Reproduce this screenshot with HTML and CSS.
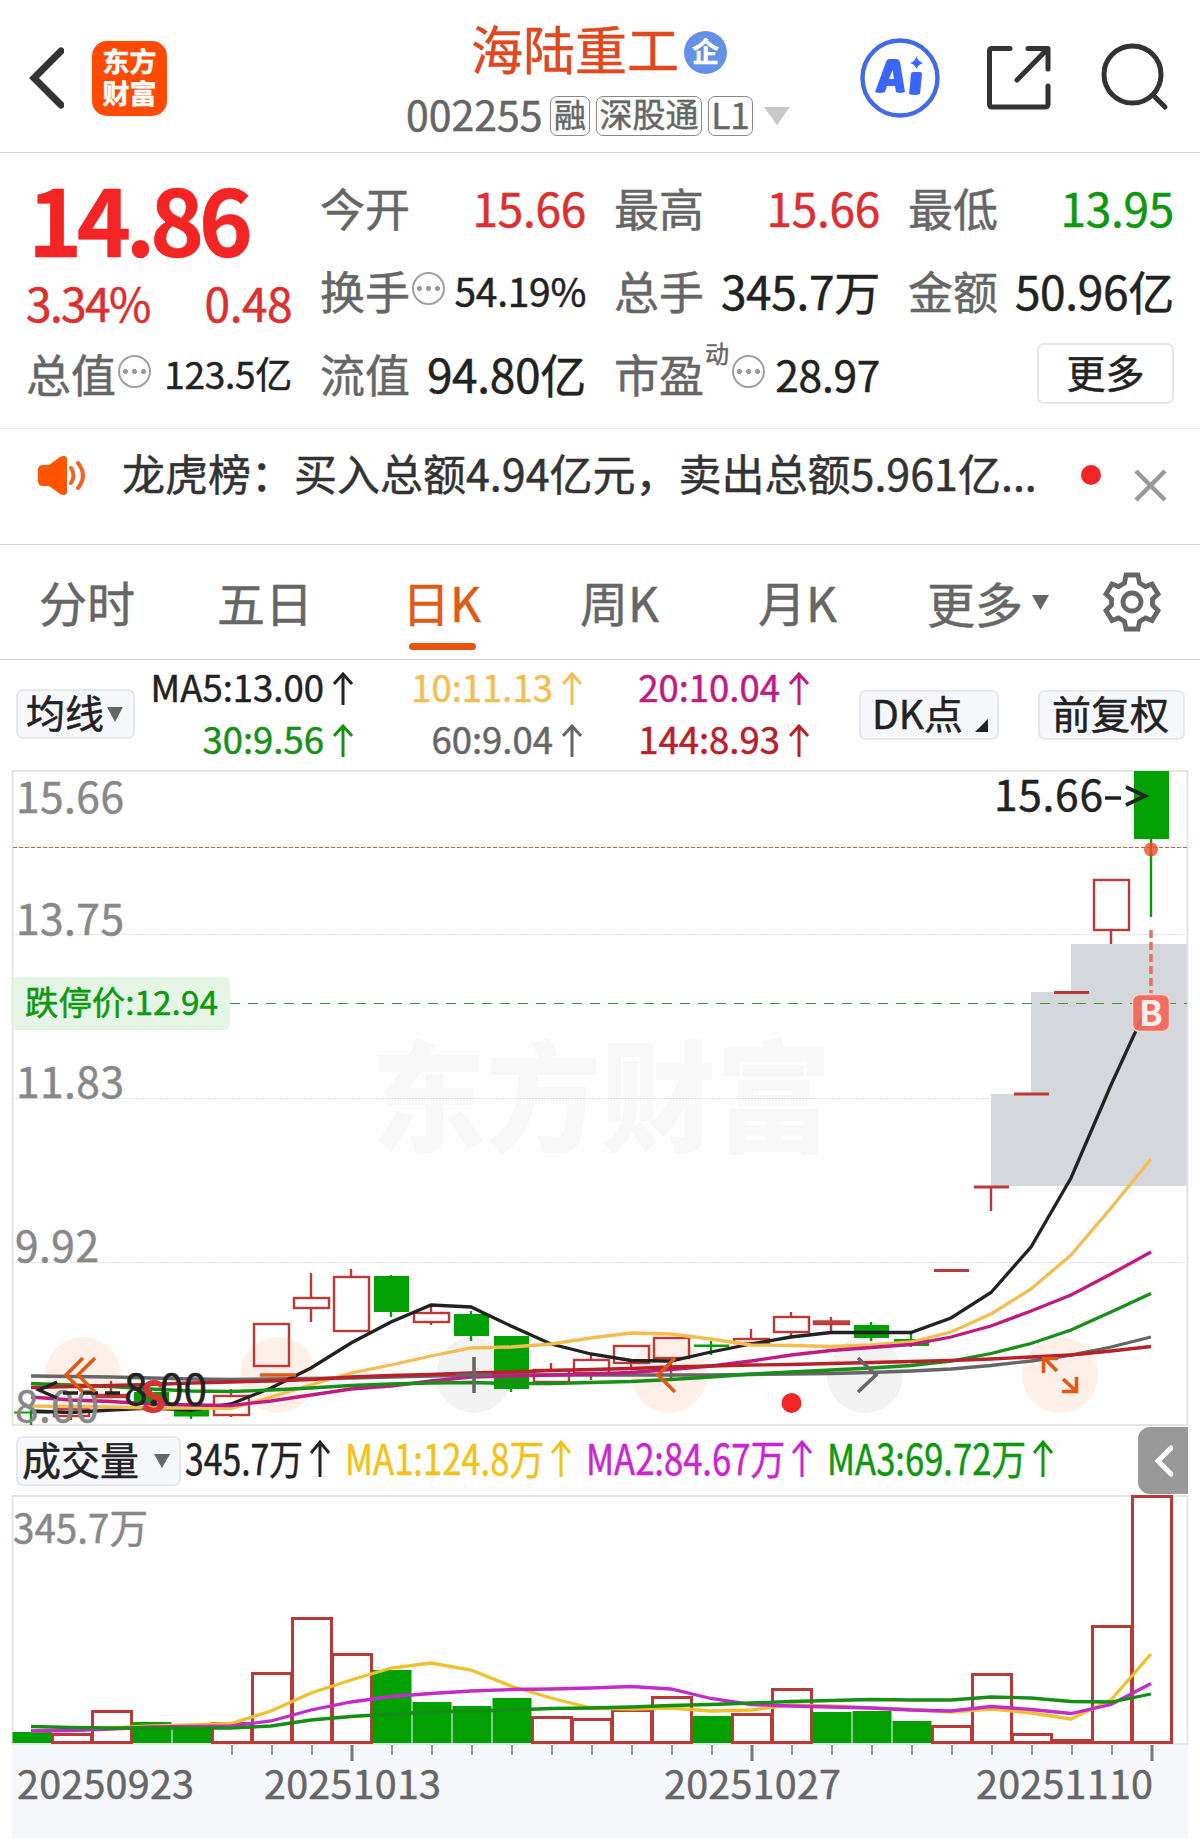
FILE: index.html
```html
<!DOCTYPE html>
<html lang="zh-CN">
<head>
    <meta charset="UTF-8">
    <meta name="viewport" content="width=device-width, initial-scale=1.0">
    <title>海陆重工 002255</title>
    <link rel="stylesheet" href="styles.css">
</head>
<body>

    <header class="header">
        <svg class="back" width="36" height="62" viewBox="0 0 36 62"><path d="M33 4 L6 31 L33 58" fill="none" stroke="#333" stroke-width="7" stroke-linecap="round"/></svg>
        <div class="logo"><span>东方</span><span>财富</span></div>
        <div class="title">
            <div class="name">海陆重工<span class="badge">企</span></div>
            <div class="code">
                <span class="number">002255</span>
                <span class="tag">融</span>
                <span class="tag wide">深股通</span>
                <span class="tag l1">L1</span>
                <svg class="arrow-down" width="26" height="18" viewBox="0 0 26 18"><path d="M0 0H26L13 18Z" fill="#c8c8c8"/></svg>
            </div>
        </div>
        <svg class="ai" width="80" height="80" viewBox="0 0 80 80">
            <circle cx="40" cy="40" r="37.500" fill="none" stroke="#4169e8" stroke-width="4.400"/>
            <path fill="#3a66fb" fill-rule="evenodd" d="M15 54 L26 24 Q27 21 30 21 H36 Q39 21 40 24 L45 54 Q40 56 36 54 L35 48 H27 L25 54 Q20 56 15 54Z M29 41 H34 L32.500 32Z"/>
            <path fill="#3a66fb" d="M53 34 H60 Q62 34 62 36 L60 56 Q55 58 49 56 L51 36 Q51 34 53 34Z M56.500 18 Q58 23.500 63 25 Q58 26.500 56.500 31 Q55 26.500 50 25 Q55 23.500 56.500 18Z"/>
        </svg>
        <svg class="share" width="66" height="66" viewBox="0 0 66 66">
            <path d="M24 3.500 H6 Q3.500 3.500 3.500 6 V59 Q3.500 62 6 62 H59 Q62 62 62 59 V41 M42 3.500 H62 V24 M61 4.500 L31 35" fill="none" stroke="#333" stroke-width="5" stroke-linecap="round" stroke-linejoin="round"/>
        </svg>
        <svg class="search" width="68" height="68" viewBox="0 0 68 68">
            <circle cx="31.500" cy="31.500" r="28.500" fill="none" stroke="#333" stroke-width="5"/>
            <path d="M52 52 L64 64" stroke="#333" stroke-width="5" stroke-linecap="round"/>
        </svg>
    </header>

    <section class="quote">
        <div class="last">
            <div class="price">14.86</div>
            <div class="change"><span class="percent">3.34%</span><span>0.48</span></div>
        </div>
        <div class="cell"><label>今开</label><b class="up">15.66</b></div>
        <div class="cell"><label>最高</label><b class="up">15.66</b></div>
        <div class="cell"><label>最低</label><b class="down">13.95</b></div>
        <div class="cell"><label>换手<i class="info"></i></label><b class="mid">54.19%</b></div>
        <div class="cell"><label>总手</label><b>345.7万</b></div>
        <div class="cell"><label>金额</label><b>50.96亿</b></div>
        <div class="cell"><label>总值<i class="info"></i></label><b class="small">123.5亿</b></div>
        <div class="cell"><label>流值</label><b>94.80亿</b></div>
        <div class="cell"><label>市盈<sup>动</sup><i class="info"></i></label><b class="pe">28.97</b></div>
        <div class="cell end"><button class="more">更多</button></div>
    </section>

    <section class="notice">
        <svg width="50" height="42" viewBox="0 0 50 42">
            <path d="M6 10 H12 L23 2 Q30 -1 30 5 V36 Q30 42 23 39 L12 31 H6 Q1 31 1 26 V15 Q1 10 6 10Z" fill="#ff5500"/>
            <path d="M34 13 Q39 20.500 34 28 M41 8 Q51 20.500 41 33" fill="none" stroke="#f4622a" stroke-width="4" stroke-linecap="round"/>
        </svg>
        <p>龙虎榜：买入总额4.94亿元，卖出总额5.961亿...</p>
        <span class="dot"></span>
        <svg class="close" width="34" height="34" viewBox="0 0 34 34"><path d="M2 2 L31 31 M31 2 L2 31" stroke="#999" stroke-width="4.500"/></svg>
    </section>

    <nav class="tabs">
        <a>分时</a>
        <a>五日</a>
        <a class="active">日K</a>
        <a>周K</a>
        <a>月K</a>
        <a class="tab-more">更多<svg width="17" height="15" viewBox="0 0 17 15"><path d="M0 0H17L8.500 15Z" fill="#666"/></svg></a>
        <svg class="gear" width="60" height="60" viewBox="0 0 60 60" fill="none" stroke="#666" stroke-width="4.800">
            <path d="M24 3 H36 L37.500 11 L43.500 14.500 L50 12 L56 22 L50.500 27 V33 L56 38.500 L50 48.500 L43.500 46 L37.500 49.500 L36 57 H24 L22.500 49.500 L16.500 46 L10 48.500 L4 38.500 L9.500 33 V27 L4 22 L10 12 L16.500 14.500 L22.500 11Z"/>
            <circle cx="30" cy="30" r="9"/>
        </svg>
    </nav>

    <section class="ma-bar">
        <button class="btn ma-btn">均线<svg width="16" height="15" viewBox="0 0 16 15"><path d="M0 0H16L8 15Z" fill="#666"/></svg></button>
        <div class="ma-list">
            <span class="ma5">MA5:13.00<svg class="up-arrow" viewBox="0 0 20 34"><path d="M10 33V2M1 12L10 2L19 12"/></svg></span>
            <span class="ma10">10:11.13<svg class="up-arrow" viewBox="0 0 20 34"><path d="M10 33V2M1 12L10 2L19 12"/></svg></span>
            <span class="ma20">20:10.04<svg class="up-arrow" viewBox="0 0 20 34"><path d="M10 33V2M1 12L10 2L19 12"/></svg></span>
            <span class="ma30">30:9.56<svg class="up-arrow" viewBox="0 0 20 34"><path d="M10 33V2M1 12L10 2L19 12"/></svg></span>
            <span class="ma60">60:9.04<svg class="up-arrow" viewBox="0 0 20 34"><path d="M10 33V2M1 12L10 2L19 12"/></svg></span>
            <span class="ma144">144:8.93<svg class="up-arrow" viewBox="0 0 20 34"><path d="M10 33V2M1 12L10 2L19 12"/></svg></span>
        </div>
        <button class="btn dk-btn">DK点<svg width="13" height="13" viewBox="0 0 13 13"><path d="M13 0V13H0Z" fill="#222"/></svg></button>
        <button class="btn fq-btn">前复权</button>
    </section>

    <!-- K line chart -->
    <svg class="chart" width="1200" height="656" viewBox="0 770 1200 656">
        <text class="watermark" x="371" y="1143" textLength="460" lengthAdjust="spacingAndGlyphs">东方财富</text>
        <path class="gap" d="M991 1094H1031V992H1071V944H1187V1186H991Z"/>
        <path class="grid" d="M13 934.500H1187M13 1098.500H990M13 1262.500H1187"/>
        <path class="frame" d="M12.500 771H1187.500V1425H12.500Z"/>
        <path d="M13 847.500H1187" stroke="#b5652f" stroke-dasharray="4 2"/>
        <path d="M230 1003.500H1187" stroke="#3f9441" stroke-width="1.200" stroke-dasharray="10 8"/>
        <g>
            <circle class="round" cx="83" cy="1375" r="38"/>
            <circle class="round" cx="278" cy="1375" r="38"/>
            <circle class="round gray" cx="474" cy="1375" r="38"/>
            <circle class="round" cx="669" cy="1375" r="38"/>
            <circle class="round gray" cx="865" cy="1375" r="38"/>
            <circle class="round" cx="1060" cy="1375" r="38"/>
        </g>
        <g id="candles"></g>
        <g id="lines"></g>
        <path class="down-tag" d="M13 977H224Q230 977 230 983V1024Q230 1030 224 1030H13Z"/>
        <text x="25" y="1015" class="down-text" textLength="193" lengthAdjust="spacingAndGlyphs">跌停价:12.94</text>
        <g class="axis">
            <text x="16" y="813" textLength="108">15.66</text>
            <text x="16" y="935" textLength="108">13.75</text>
            <text x="16" y="1098" textLength="108">11.83</text>
            <text x="15" y="1262" textLength="84">9.92</text>
            <text x="15" y="1422" textLength="84">8.00</text>
        </g>
        <text class="sell" x="140" y="1412">S</text>
        <path d="M57 1382L39 1390L57 1398M63 1393H78M83 1393H98M105 1393H120" fill="none" stroke="#222" stroke-width="3.400"/>
        <text class="mark" x="124" y="1405" textLength="83">8.00</text>
        <text class="mark" x="994" y="811" textLength="109">15.66</text>
        <path d="M1105 798H1121M1126 787L1145 796L1126 805" fill="none" stroke="#222" stroke-width="3.600"/>
        <g fill="none" stroke="#e05a14" stroke-width="3.600">
            <path d="M83 1358L66 1375L83 1392M95 1358L78 1375L95 1392"/>
            <path d="M260 1375H296"/>
            <path d="M675 1358L658 1375L675 1392"/>
            <path d="M1057 1371L1044 1358M1043.500 1373V1358.500H1058M1063 1379L1076 1391M1076.500 1377V1391.500H1062"/>
            <path stroke="#666" d="M474 1357V1393M456 1375H492M858 1358L876 1375L858 1392"/>
        </g>
        <circle cx="791.500" cy="1403" r="10" fill="#f22424"/>
        <circle cx="1151" cy="849.500" r="7" fill="#f0492c" opacity=".8"/>
        <path d="M1151 930V993" stroke="#e8705f" stroke-width="3.500" stroke-dasharray="8 4"/>
        <rect x="1132.500" y="994.500" width="37" height="37" rx="7" fill="#f0695a" fill-opacity=".94" stroke="#fbd3cd" stroke-width="1.500"/>
        <text class="buy" x="1151" y="1026">B</text>
    </svg>

    <section class="vol-bar">
        <button class="btn vol-btn">成交量<svg width="16" height="14" viewBox="0 0 16 14"><path d="M0 0H16L8 14Z" fill="#666"/></svg></button>
        <svg class="vol-legend" width="880" height="68" viewBox="184 1427 880 68">
            <g fill="#222" stroke="#222"><text x="185" y="1475" textLength="118" lengthAdjust="spacingAndGlyphs">345.7万</text></g>
            <g fill="#f2c21a" stroke="#f2c21a"><text x="345" y="1475" textLength="199" lengthAdjust="spacingAndGlyphs">MA1:124.8万</text></g>
            <g fill="#c926d2" stroke="#c926d2"><text x="586" y="1475" textLength="199" lengthAdjust="spacingAndGlyphs">MA2:84.67万</text></g>
            <g fill="#0f980f" stroke="#0f980f"><text x="827" y="1475" textLength="199" lengthAdjust="spacingAndGlyphs">MA3:69.72万</text></g>
            <g fill="none" stroke-width="3">
                <path stroke="#222" d="M320 1477V1442M311 1453L320 1442L329 1453"/>
                <path stroke="#f2c21a" d="M561 1477V1442M552 1453L561 1442L570 1453"/>
                <path stroke="#c926d2" d="M802 1477V1442M793 1453L802 1442L811 1453"/>
                <path stroke="#0f980f" d="M1043 1477V1442M1034 1453L1043 1442L1052 1453"/>
            </g>
        </svg>
        <div class="drawer"><svg width="20" height="32" viewBox="0 0 20 32"><path d="M18 3L5 16L18 29" fill="none" stroke="#fff" stroke-width="5" stroke-linecap="round"/></svg></div>
    </section>

    <!-- volume chart -->
    <svg class="chart" width="1200" height="348" viewBox="0 1495 1200 348">
        <path d="M12 1745H1188V1838H12Z" fill="#f6f7fa"/>
        <path class="frame" d="M12.500 1496H1187.500V1744H12.500Z"/>
        <text class="vol-max" x="13" y="1543" textLength="135" lengthAdjust="spacingAndGlyphs">345.7万</text>
        <g id="volumes"></g>
        <g id="volLines"></g>
        <g id="ticks"></g>
        <g class="dates">
            <text x="17" y="1799" textLength="177">20250923</text>
            <text x="264" y="1799" textLength="177">20251013</text>
            <text x="664" y="1799" textLength="177">20251027</text>
            <text x="976" y="1799" textLength="177">20251110</text>
        </g>
    </svg>

    <script>
        const RED = '#bb3936';
        const GREEN = '#02a002';
        const STEP = 40;
        const FIRST = 31;

        // [color, body top, body bottom, wick top, wick bottom]
        const candles = [
            ['g', 1411.5, 1413.5, 1408, 1425], ['r', 1409, 1416, 1409, 1420], ['r', 1395, 1397, 1381, 1397],
            ['g', 1392, 1402, 1389, 1404], ['g', 1409, 1416.5, 1409, 1419], ['r', 1396, 1415, 1389, 1417],
            ['r', 1324, 1366, 1324, 1366], ['r', 1298, 1308, 1273, 1322], ['r', 1277, 1331, 1269, 1331],
            ['g', 1276, 1312, 1275, 1317], ['r', 1313, 1322, 1306, 1325], ['g', 1314, 1336, 1311, 1341],
            ['g', 1336, 1389, 1336, 1392], ['r', 1370, 1382, 1363, 1382], ['r', 1360, 1373, 1355, 1380],
            ['r', 1346, 1363, 1345, 1368], ['r', 1338, 1358, 1338, 1380], ['g', 1344.5, 1347, 1341, 1355],
            ['r', 1339, 1343, 1329, 1343], ['r', 1317, 1332, 1312, 1336], ['r', 1321.5, 1324, 1317, 1332],
            ['g', 1325, 1338, 1322, 1341], ['g', 1339, 1346, 1332, 1347], ['r', 1270.5, 1270.5, 1270, 1270],
            ['r', 1187, 1187, 1187, 1211], ['r', 1094, 1094, 1094, 1094], ['r', 992.5, 992.5, 992, 992],
            ['r', 880, 930, 880, 944], ['g', 771, 839, 839, 917]
        ];

        const priceLines = {
            '#666': [1376, 1376.5, 1377, 1378, 1379, 1379.5, 1379, 1378.5, 1378, 1377, 1376, 1375, 1375, 1375, 1375, 1375, 1375, 1375, 1374.5, 1374, 1373.5, 1372.5, 1371, 1369, 1365.5, 1361, 1355, 1347, 1337],
            '#222': [1411, 1412.5, 1410, 1408, 1410, 1404, 1388, 1368, 1343, 1322, 1305, 1307, 1326, 1344, 1354, 1360.5, 1361, 1352, 1344, 1337, 1332.5, 1332.5, 1332.5, 1318, 1292.5, 1247, 1178, 1085, 998],
            '#f4bd52': [1406, 1406.5, 1407, 1408, 1408, 1408.7, 1397, 1385, 1373, 1365, 1356, 1348, 1347, 1344, 1338, 1333, 1334, 1339, 1345, 1345.5, 1346.5, 1345, 1342, 1332, 1314, 1289, 1255, 1208, 1159],
            '#bf1b80': [1397, 1400, 1401.5, 1404, 1405, 1405.5, 1401, 1395, 1389, 1386, 1381, 1377, 1376, 1375, 1374, 1372.5, 1369.5, 1366, 1361, 1355, 1350.5, 1347.5, 1344.5, 1337, 1326, 1311, 1295, 1274, 1252],
            '#188f18': [1383.5, 1385, 1386.5, 1389, 1391, 1391.5, 1390, 1388, 1385.5, 1384, 1383, 1382.5, 1383.5, 1383.5, 1382.5, 1381.5, 1379.5, 1377, 1374, 1372, 1370, 1368, 1365.5, 1361, 1353.5, 1343.5, 1330, 1312, 1293.5],
            '#b9202a': [1387.5, 1386.5, 1385.5, 1384.5, 1383, 1382, 1381, 1379.5, 1377, 1375.5, 1374.5, 1373, 1372, 1370.5, 1369.5, 1368.5, 1367, 1366, 1365, 1364.5, 1363.5, 1362.5, 1361.5, 1360.5, 1359, 1357, 1355, 1351, 1346.5]
        };

        const volumes = [
            ['g', 1732], ['r', 1734], ['r', 1711], ['g', 1722], ['g', 1727], ['r', 1723], ['r', 1673], ['r', 1618],
            ['r', 1654], ['g', 1670], ['g', 1702], ['g', 1706], ['g', 1698], ['r', 1717], ['r', 1719], ['r', 1710],
            ['r', 1697], ['g', 1716], ['r', 1714], ['r', 1689], ['g', 1712], ['g', 1711], ['g', 1721], ['r', 1726],
            ['r', 1674], ['r', 1734], ['r', 1740], ['r', 1626], ['r', 1496]
        ];

        const volumeLines = {
            '#efc02e': [1731, 1730, 1728, 1726, 1725, 1723.5, 1711, 1693, 1680, 1668, 1663, 1670, 1686, 1698, 1708, 1709, 1708, 1711, 1710, 1705, 1706, 1708, 1709.5, 1712, 1709, 1713, 1719, 1700, 1654],
            '#c22cc8': [1731, 1730.5, 1729, 1727, 1726.5, 1726, 1721, 1710, 1702, 1696.5, 1693.5, 1691, 1689.5, 1689, 1688, 1686.5, 1689, 1698.5, 1704.5, 1706, 1707, 1708, 1710, 1711, 1706.5, 1709.5, 1713.5, 1704.5, 1683.5],
            '#148e14': [1726.5, 1727.5, 1728, 1728, 1728, 1728, 1726, 1720, 1716.5, 1714, 1712, 1711, 1710, 1708.5, 1708, 1707, 1705.5, 1704.5, 1703, 1701.5, 1700.5, 1699.5, 1700, 1700, 1697, 1698, 1701.5, 1702, 1694]
        };

        function drawCandles() {
            let html = '';
            candles.forEach(([c, top, bottom, high, low], i) => {
                const x = FIRST + i * STEP;
                const color = c === 'g' ? GREEN : RED;
                if (c === 'g') {
                    html += `<path d="M${x} ${high}V${low}" stroke="${color}" stroke-width="2.4"/>`;
                    html += `<rect x="${x - 17}" y="${top}" width="35" height="${bottom - top}" fill="${color}"/>`;
                } else {
                    html += `<path d="M${x} ${high}V${top}M${x} ${bottom}V${low}" stroke="${color}" stroke-width="2.4"/>`;
                    if (top === bottom) {
                        html += `<path d="M${x - 17} ${top}H${x + 18}" stroke="${color}" stroke-width="2.8"/>`;
                    } else {
                        html += `<rect x="${x - 17}" y="${top}" width="35" height="${bottom - top}" fill="none" stroke="${color}" stroke-width="2.4"/>`;
                    }
                }
            });
            document.getElementById('candles').innerHTML = html;
        }

        function drawVolumes() {
            let html = '';
            volumes.forEach(([c, top], i) => {
                const x = FIRST + i * STEP;
                if (c === 'g') {
                    html += `<rect x="${x - 18.5}" y="${top}" width="39" height="${1743 - top}" fill="${GREEN}"/>`;
                } else {
                    html += `<rect x="${x - 18.5}" y="${top + .5}" width="39" height="${1742 - top}" fill="none" stroke="${RED}" stroke-width="3"/>`;
                }
            });
            document.getElementById('volumes').innerHTML = html;
        }

        function drawLines(id, lines) {
            let html = '';
            for (const color in lines) {
                const points = lines[color].map((y, i) => `${FIRST + i * STEP},${y}`).join(' ');
                html += `<polyline points="${points}" fill="none" stroke="${color}" stroke-width="3.3"/>`;
            }
            document.getElementById(id).innerHTML = html;
        }

        function drawTicks() {
            let html = '';
            for (let i = 5; i < 29; i++) {
                const x = FIRST + i * STEP + 1;
                const major = i === 8 || i === 18 || i === 28;
                html += `<path d="M${x} 1745V${major ? 1761 : 1755}" stroke="#777" stroke-width="${major ? 3 : 1.5}"/>`;
            }
            document.getElementById('ticks').innerHTML = html;
        }

        drawCandles();
        drawVolumes();
        drawLines('lines', priceLines);
        drawLines('volLines', volumeLines);
        drawTicks();
    </script>

</body>
</html>
```
FILE: styles.css
```css
* {
    box-sizing: border-box;
}

body {
    margin: 0;
    width: 1200px;
    background: #fefefe;
    color: #222;
    font-family: "Noto Sans CJK SC", "Noto Sans", sans-serif;
    -webkit-text-stroke: .5px;
    overflow: hidden;
}

svg {
    display: block;
    flex: none;
}

button {
    font-family: inherit;
    color: #222;
    padding: 0;
}

.header {
    display: flex;
    height: 153px;
    border-bottom: 1px solid #d6d6d6;
}

.back {
    margin: 47px 0 0 28px;
}

.logo {
    display: flex;
    flex-direction: column;
    justify-content: center;
    align-items: center;
    width: 75px;
    height: 75px;
    margin: 41px 0 0 28px;
    border-radius: 15px;
    background: #ff4a03;
    color: #fff;
    font-size: 27px;
    font-weight: 700;
    line-height: 32px;
    padding-bottom: 3px;
}

.title {
    width: 390px;
    margin-left: 239px;
    padding-top: 17px;
}

.name {
    display: flex;
    align-items: center;
    height: 62px;
    padding-left: 65px;
    font-size: 52px;
    line-height: 62px;
    color: #e0481f;
}

.badge {
    width: 43px;
    height: 43px;
    margin: 8px 0 0 5px;
    border-radius: 50%;
    background: #6490e6;
    color: #fff;
    font-size: 27px;
    font-weight: 700;
    line-height: 39px;
    text-align: center;
}

.code {
    display: flex;
    align-items: center;
    height: 40px;
    margin-top: 17px;
    color: #666;
}

.number {
    font-size: 41px;
    line-height: 40px;
    width: 144px;
    padding-bottom: 6px;
}

.tag {
    width: 40px;
    height: 40px;
    margin-right: 6px;
    border: 1.5px solid #888;
    border-radius: 7px;
    font-size: 32px;
    line-height: 33px;
    text-align: center;
}

.tag.wide {
    width: 106px;
    font-size: 33px;
}

.tag.l1 {
    width: 45px;
    font-size: 35px;
}

.arrow-down {
    margin-left: 5px;
}

.ai {
    margin: 38px 0 0 64px;
}

.share {
    margin: 45px 0 0 46px;
}

.search {
    margin: 43px 0 0 49px;
}

.quote {
    display: grid;
    grid-template-columns: repeat(4, 266px);
    grid-template-rows: repeat(3, 83px);
    column-gap: 28px;
    height: 276px;
    padding: 13px 0 0 26px;
    border-bottom: 1px solid #ebebeb;
}

.last {
    grid-row: span 2;
    color: #f22424;
}

.price {
    height: 98px;
    padding-left: 2px;
    font-size: 92px;
    font-weight: 700;
    line-height: 102px;
    letter-spacing: -5.500px;
}

.change {
    display: flex;
    justify-content: space-between;
    font-size: 46px;
    line-height: 76px;
    color: #dc2f2f;
    letter-spacing: -.5px;
}

.percent {
    letter-spacing: -1.600px;
}

.cell {
    display: flex;
    justify-content: space-between;
    align-items: center;
    line-height: 83px;
}

.cell label {
    display: flex;
    align-items: center;
    font-size: 45px;
    color: #666;
}

.cell b {
    font-size: 46px;
    font-weight: 400;
    letter-spacing: -.3px;
}

.cell b.mid {
    font-size: 39px;
}

.cell b.small {
    font-size: 37px;
}

.cell b.pe {
    font-size: 42.500px;
}

.cell .up {
    color: #dc2f2f;
}

.cell .down {
    color: #0f980f;
}

.cell.end {
    justify-content: flex-end;
}

.cell sup {
    width: 26px;
    font-size: 24px;
    line-height: 24px;
    text-align: center;
    margin-bottom: 42px;
}

.info {
    width: 33px;
    height: 33px;
    margin: -4px 0 0 2px;
    border: 2.5px solid #a0a0a0;
    border-radius: 50%;
    background:
        radial-gradient(circle, #999 2.2px, transparent 2.8px) -9px 0 no-repeat,
        radial-gradient(circle, #999 2.2px, transparent 2.8px) 0 0 no-repeat,
        radial-gradient(circle, #999 2.2px, transparent 2.8px) 9px 0 no-repeat;
}

.more {
    width: 137px;
    height: 61px;
    margin-top: -1px;
    border: 2px solid #e6e6e6;
    border-radius: 7px;
    background: #fff;
    font-size: 39px;
    line-height: 50px;
    padding-bottom: 5px;
}

.notice {
    display: flex;
    height: 116px;
    padding: 26px 0 0 37px;
    border-bottom: 1px solid #d6d6d6;
}

.notice p {
    width: 931px;
    margin: -7px 0 0 35px;
    font-size: 43px;
    line-height: 48px;
    white-space: nowrap;
    color: #333;
}

.dot {
    width: 20px;
    height: 20px;
    margin: 10px 0 0 28px;
    border-radius: 50%;
    background: #f22424;
}

.close {
    margin: 14px 0 0 33px;
}

.tabs {
    display: flex;
    align-items: center;
    height: 115px;
    padding-left: 39px;
    border-bottom: 1px solid #d6d6d6;
    font-size: 48px;
    color: #666;
}

.tabs a {
    position: relative;
    height: 114px;
    width: 176px;
    line-height: 112px;
}

.tabs a:nth-child(2) {
    width: 187px;
    padding-left: 2px;
}

.tabs a:nth-child(3) {
    width: 178px;
}

.tabs a:nth-child(4) {
    width: 178px;
}

.tabs a:nth-child(5) {
    width: 169px;
}

.tabs .active {
    color: #df5a14;
}

.tabs .active::after {
    content: "";
    position: absolute;
    left: 7px;
    bottom: 9px;
    width: 67px;
    height: 7px;
    border-radius: 4px;
    background: #e6560c;
}

.tabs .tab-more {
    display: flex;
    align-items: center;
    line-height: 110px;
}

.tab-more svg {
    margin-left: 9px;
}

.gear {
    margin-left: -1px;
}

.ma-bar {
    display: flex;
    height: 110px;
    padding-left: 16px;
}

.btn {
    display: flex;
    align-items: center;
    height: 50px;
    border: 2px solid #e6e8ec;
    border-radius: 7px;
    background: #f6f7fa;
    font-size: 39px;
    line-height: 40px;
    white-space: nowrap;
}

.ma-btn {
    width: 119px;
    margin-top: 29px;
    padding: 0 0 6px 8px;
}

.ma-btn svg {
    margin: 6px 0 0 3px;
}

.ma-list {
    display: grid;
    grid-template-columns: 218px 229px 227px;
    grid-template-rows: 52px 52px;
    padding-top: 1px;
    font-size: 36.500px;
    line-height: 52px;
}

.ma-list span {
    display: flex;
    justify-content: flex-end;
    align-items: center;
}

.up-arrow {
    width: 20px;
    height: 34px;
    margin-left: 9px;
    fill: none;
    stroke: currentColor;
    stroke-width: 3;
    margin-top: 3px;
}

.ma5 { color: #222; }
.ma10 { color: #f4bd52; }
.ma20 { color: #bf1b80; }
.ma30 { color: #188f18; }
.ma60 { color: #666; }
.ma144 { color: #b9202a; }

.dk-btn {
    width: 140px;
    margin: 30px 0 0 50px;
    padding: 0 0 6px 11px;
}

.dk-btn svg {
    margin: 26px 0 0 12px;
}

.fq-btn {
    width: 147px;
    margin: 30px 0 0 39px;
    padding: 0 0 6px 12px;
}

.chart {
    overflow: visible;
}

.chart text,
.vol-legend text {
    font-family: "Noto Sans CJK SC", sans-serif;
    stroke-width: .5px;
}

.frame {
    fill: none;
    stroke: #e4e4e4;
    stroke-width: 2;
}

.grid {
    stroke: #e0e0e0;
    stroke-dasharray: 2 1;
}

.gap {
    fill: #d4d7dc;
}

.watermark {
    font-size: 120px;
    font-weight: 900;
    fill: #f8f8f8;
}

.round {
    fill: #fef0e8;
}

.round.gray {
    fill: #f2f2f2;
}

.down-tag {
    fill: #e4f4e5;
}

.down-text {
    font-size: 33px;
    fill: #0f980f;
    stroke: #0f980f;
}

.axis {
    font-size: 42.500px;
    fill: #888;
    stroke: #888;
}

.mark {
    font-size: 42.500px;
    fill: #222;
    stroke: #222;
}

.sell {
    font-size: 42px;
    font-weight: 700;
    fill: #d83232;
}

.buy {
    font-size: 35px;
    font-weight: 700;
    fill: #fdeeee;
    text-anchor: middle;
}

.vol-bar {
    display: flex;
    height: 69px;
    padding-left: 16px;
}

.vol-btn {
    width: 165px;
    margin-top: 10px;
    padding: 0 0 6px 4px;
}

.vol-btn svg {
    margin: 5px 0 0 15px;
}

.vol-legend {
    margin: 1px 0 0 3px;
    font-size: 42px;
}

.drawer {
    display: flex;
    justify-content: center;
    align-items: center;
    width: 50px;
    height: 67px;
    margin: 1px 0 0 74px;
    border-radius: 12px 0 0 12px;
    background: #999;
}

.vol-max {
    font-size: 40px;
    fill: #888;
    stroke: #888;
}

.dates {
    font-size: 39.500px;
    fill: #666;
    stroke: #666;
}
```
